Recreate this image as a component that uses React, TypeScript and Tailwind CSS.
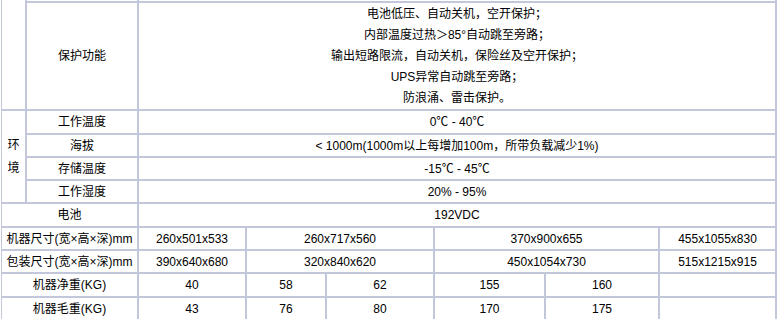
import React from "react";

const cell = "bg-white flex items-center justify-center whitespace-nowrap";

export default function App() {
  const protect = [
    "电池低压、自动关机，空开保护；",
    "内部温度过热＞85°自动跳至旁路；",
    "输出短路限流，自动关机，保险丝及空开保护；",
    "UPS异常自动跳至旁路；",
    "防浪涌、雷击保护。",
  ];
  const env: [string, string][] = [
    ["工作温度", "0℃ - 40℃"],
    ["海拔", "< 1000m(1000m以上每增加100m，所带负载减少1%)"],
    ["存储温度", "-15℃ - 45℃"],
    ["工作湿度", "20% - 95%"],
  ];
  const dims: [string, string[]][] = [
    ["机器尺寸(宽×高×深)mm", ["260x501x533", "260x717x560", "370x900x655", "455x1055x830"]],
    ["包装尺寸(宽×高×深)mm", ["390x640x680", "320x840x620", "450x1054x730", "515x1215x915"]],
  ];
  const weights: [string, string[]][] = [
    ["机器净重(KG)", ["40", "58", "62", "155", "160", ""]],
    ["机器毛重(KG)", ["43", "76", "80", "170", "175", ""]],
  ];
  return (
    <div
      className="w-[777px] h-[319px] overflow-hidden bg-white pl-px text-[12px] text-black"
      style={{ fontFamily: '"Liberation Sans", "Noto Sans CJK SC", sans-serif' }}
    >
      <div className="grid grid-cols-[23px_110px_106px_78px_106px_109px_112px_115px] grid-rows-[1px_106px_22px_21px_21px_21px_22px_21px_21px_22px_21px] gap-[2px] bg-[#c3c7db] pl-px pr-[2px] pb-[2px] w-[776px]">
        {/* top sliver row */}
        <div className="bg-white row-span-2" />
        <div className="bg-white" />
        <div className="bg-white col-span-6" />
        {/* protection */}
        <div className={cell}>保护功能</div>
        <div className="bg-white col-span-6 flex flex-col items-center justify-center leading-[21px]">
          {protect.map((t) => (
            <div key={t} className="whitespace-nowrap">{t}</div>
          ))}
        </div>
        {/* environment */}
        <div className="bg-white row-span-4 flex flex-col items-center justify-center leading-[23px]">
          <div>环</div>
          <div>境</div>
        </div>
        {env.map(([k, v], i) => (
          <React.Fragment key={k}>
            <div className={`${cell} ${i === 0 ? "col-start-2" : ""}`}>{k}</div>
            <div className={`${cell} col-span-6`}>{v}</div>
          </React.Fragment>
        ))}
        {/* battery */}
        <div className={`${cell} col-span-2`}>电池</div>
        <div className={`${cell} col-span-6`}>192VDC</div>
        {dims.map(([k, v]) => (
          <React.Fragment key={k}>
            <div className={`${cell} col-span-2`}>{k}</div>
            <div className={cell}>{v[0]}</div>
            <div className={`${cell} col-span-2`}>{v[1]}</div>
            <div className={`${cell} col-span-2`}>{v[2]}</div>
            <div className={cell}>{v[3]}</div>
          </React.Fragment>
        ))}
        {weights.map(([k, v]) => (
          <React.Fragment key={k}>
            <div className={`${cell} col-span-2`}>{k}</div>
            {v.map((x, i) => (
              <div key={i} className={cell}>{x}</div>
            ))}
          </React.Fragment>
        ))}
      </div>
    </div>
  );
}
